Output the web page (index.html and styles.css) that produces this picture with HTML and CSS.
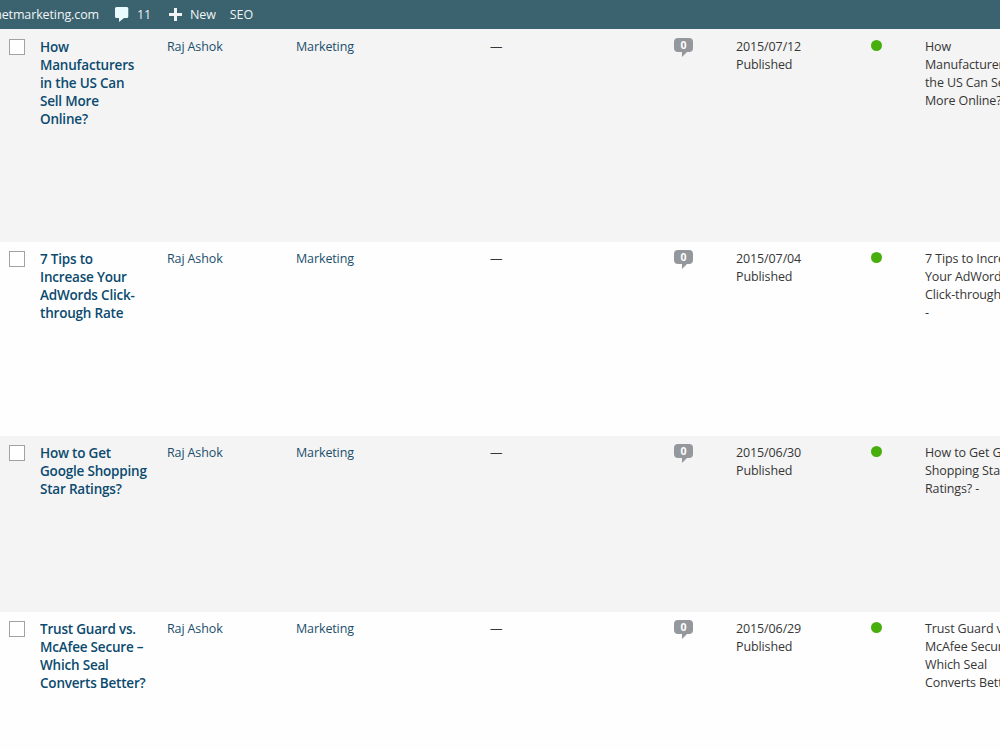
FILE: index.html
```
<!DOCTYPE html>
<html lang="en">
<head>
  <meta charset="UTF-8">
  <meta name="viewport" content="width=device-width, initial-scale=1.0">
  <title>Posts</title>
  <link rel="stylesheet" href="styles.css">
</head>
<body>
  <header class="admin-bar">
    <a class="site-name">netmarketing.com</a>
    <a class="bar-item comments">
      <svg width="14" height="15" viewBox="0 0 14 15"><path d="M1.500 0h10.500Q13.300 0 13.300 1.500v8Q13.300 11 12 11H9L4 15V11H1.500Q0 11 0 9.500V1.500Q0 0 1.500 0z" fill="#e9fbfd"/></svg>
      <span>11</span>
    </a>
    <a class="bar-item new-post">
      <svg width="13" height="13" viewBox="0 0 13 13"><path d="M5 0h3v5h5v3H8v5H5V8H0V5h5z" fill="#f1f5f6"/></svg>
      <span>New</span>
    </a>
    <a class="bar-item seo">SEO</a>
  </header>

  <main class="posts">
    <div class="post-row first">
      <input type="checkbox">
      <a class="title">How<br>Manufacturers<br>in the US Can<br>Sell More<br>Online?</a>
      <a>Raj Ashok</a>
      <a>Marketing</a>
      <span>—</span>
      <span class="bubble">0</span>
      <span>2015/07/12<br>Published</span>
      <span class="score"></span>
      <span class="seo-title">How<br>Manufacturers in<br>the US Can Sell<br>More Online? -</span>
    </div>

    <div class="post-row second">
      <input type="checkbox">
      <a class="title">7 Tips to<br>Increase Your<br>AdWords Click-<br>through Rate</a>
      <a>Raj Ashok</a>
      <a>Marketing</a>
      <span>—</span>
      <span class="bubble">0</span>
      <span>2015/07/04<br>Published</span>
      <span class="score"></span>
      <span class="seo-title">7 Tips to Increase<br>Your AdWords<br>Click-through Rate<br>-</span>
    </div>

    <div class="post-row third">
      <input type="checkbox">
      <a class="title">How to Get<br>Google Shopping<br>Star Ratings?</a>
      <a>Raj Ashok</a>
      <a>Marketing</a>
      <span>—</span>
      <span class="bubble">0</span>
      <span>2015/06/30<br>Published</span>
      <span class="score"></span>
      <span class="seo-title">How to Get Google<br>Shopping Star<br>Ratings? -</span>
    </div>

    <div class="post-row fourth">
      <input type="checkbox">
      <a class="title">Trust Guard vs.<br>McAfee Secure –<br>Which Seal<br>Converts Better?</a>
      <a>Raj Ashok</a>
      <a>Marketing</a>
      <span>—</span>
      <span class="bubble">0</span>
      <span>2015/06/29<br>Published</span>
      <span class="score"></span>
      <span class="seo-title">Trust Guard vs.<br>McAfee Secure –<br>Which Seal<br>Converts Better? -</span>
    </div>
  </main>
</body>
</html>
```
FILE: styles.css
```
* {
  box-sizing: border-box;
  margin: 0;
  padding: 0;
}

body {
  height: 750px;
  overflow: hidden;
  background: #fefefe;
  color: #363636;
  font-family: "Open Sans", sans-serif;
  font-size: 12.5px;
  letter-spacing: -0.12px;
  line-height: 18px;
}

.admin-bar {
  display: flex;
  align-items: center;
  height: 29px;
  background: #3a626f;
  color: #f1f5f6;
  white-space: nowrap;
}

.site-name {
  display: flex;
  justify-content: flex-end;
  width: 99px;
}

.bar-item {
  display: flex;
  align-items: center;
}

.comments {
  gap: 8px;
  margin-left: 16px;
}

.new-post {
  gap: 8px;
  margin-left: 18px;
}

.seo {
  margin-left: 14px;
}

.post-row {
  display: grid;
  grid-template-columns: 31px 127px 129px 194px 184px 62px 135px 54px 120px;
  align-items: start;
  padding: 8px 0 0 9px;
  white-space: nowrap;
}

.post-row a {
  color: #1a4f6c;
}

.post-row .title {
  color: #0b4a6f;
  font-size: 13.5px;
  font-weight: 600;
  letter-spacing: -0.2px;
}

.first {
  height: 213px;
  padding-top: 9px;
  background: #f4f4f4;
}

.second {
  height: 194px;
}

.third {
  height: 176px;
  background: #f4f4f4;
}

.fourth {
  height: 138px;
}

input[type="checkbox"] {
  appearance: none;
  width: 16px;
  height: 16px;
  margin-top: 1px;
  border: 1px solid #a0a2a3;
  background: #fff;
}

.bubble {
  position: relative;
  width: 19px;
  height: 14px;
  border-radius: 4px;
  background: #94989c;
  color: #fff;
  font-size: 10.5px;
  font-weight: 700;
  line-height: 14px;
  text-align: center;
}

.bubble::after {
  content: "";
  position: absolute;
  top: 14px;
  left: 8px;
  border-top: 5px solid #94989c;
  border-right: 5px solid transparent;
}

.score {
  width: 11px;
  height: 11px;
  margin-top: 2px;
  border-radius: 50%;
  background: #48ae0c;
}
```
